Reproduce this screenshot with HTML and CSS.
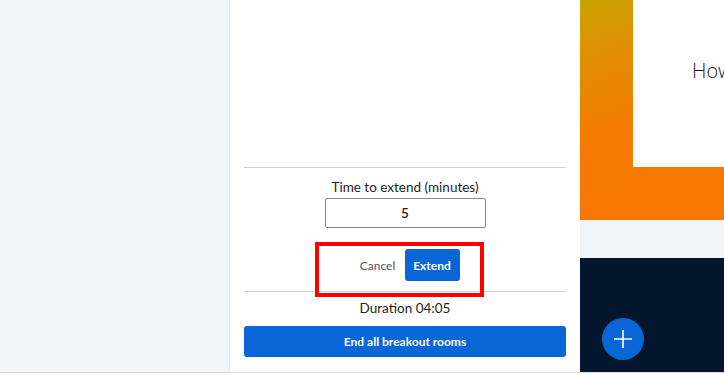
FILE: index.html
```html
<!DOCTYPE html>
<html>
<head>
<meta charset="utf-8">
<link rel="stylesheet" href="styles.css">
</head>
<body>
<div class="app">
  <aside class="sidebar"></aside>
  <section class="panel">
    <div class="spacer"></div>
    <hr class="sep">
    <label class="field-label" for="mins">Time to extend (minutes)</label>
    <input id="mins" class="field" type="text" value="5">
    <div class="actions">
      <button class="btn-link">Cancel</button>
      <button class="btn-primary">Extend</button>
      <div class="highlight"></div>
    </div>
    <hr class="sep sep-2">
    <div class="duration">Duration 04:05</div>
    <button class="btn-end">End all breakout rooms</button>
  </section>
  <section class="stage">
    <div class="slide">
      <div class="slide-card"><span class="slide-text">How</span></div>
    </div>
    <div class="band"></div>
    <div class="dock">
      <button class="fab" aria-label="Add">
        <svg width="20" height="20" viewBox="0 0 20 20"><path d="M10 1v18M1 10h18" stroke="#fff" stroke-width="1.6" fill="none"/></svg>
      </button>
    </div>
  </section>
</div>
</body>
</html>
```

FILE: styles.css
```css
* { box-sizing: border-box; }
html, body { margin: 0; padding: 0; background: #fff; }
body { font-family: "Lato", "Noto Sans", sans-serif; color: #222; }

.app {
  display: flex;
  height: 373px;
  border-bottom: 1px solid #dcdcdc;
  overflow: hidden;
}

.sidebar {
  width: 230px;
  flex: none;
  background: #f3f6f9;
  border-right: 1px solid #e7eaee;
}

.panel {
  width: 350px;
  flex: none;
  background: #fff;
  display: flex;
  flex-direction: column;
  align-items: center;
  padding: 0 14px 15px;
}
.spacer { flex: 1; }

.sep {
  width: 100%;
  margin: 0;
  border: 0;
  border-top: 1px solid #cfcfcf;
  height: 0;
}
.sep-2 { margin-top: 10px; }

.field-label {
  margin-top: 11px;
  font-size: 13.5px;
  line-height: 16px;
  color: #1e1e1e;
}

.field {
  margin-top: 3px;
  width: 161px;
  height: 30px;
  border: 1px solid #8a8a8a;
  border-radius: 2px;
  text-align: center;
  font-family: inherit;
  font-size: 13.5px;
  font-weight: 600;
  color: #222;
  padding: 0;
}

.actions {
  position: relative;
  width: 100%;
  margin-top: 21px;
  display: flex;
  justify-content: center;
  height: 32px;
}

.btn-link {
  width: 54px;
  border: 0;
  background: none;
  font-family: inherit;
  font-size: 12px;
  color: #555;
  padding: 0;
}

.btn-primary {
  width: 55px;
  border: 0;
  border-radius: 3px;
  background: #0866d6;
  color: #fff;
  font-family: inherit;
  font-size: 12px;
  font-weight: 700;
  padding: 0;
}

.highlight {
  position: absolute;
  left: 71px;
  top: -7px;
  width: 169px;
  height: 55px;
  border: 4px solid #f00;
  pointer-events: none;
}

.duration {
  margin-top: 8px;
  font-size: 13.5px;
  line-height: 16px;
  color: #1e1e1e;
}

.btn-end {
  margin-top: 10px;
  width: 100%;
  height: 31px;
  border: 0;
  border-radius: 3px;
  background: #0866d6;
  color: #fff;
  font-family: inherit;
  font-size: 12px;
  font-weight: 700;
}

.stage {
  flex: 1;
  display: flex;
  flex-direction: column;
  background: #03162d;
}

.slide {
  height: 220px;
  flex: none;
  background: linear-gradient(160deg, #c9a200 0%, #e78a00 30%, #f57800 55%, #f77800 100%);
  padding-left: 53px;
}

.slide-card {
  height: 167px;
  background: #fff;
  padding: 57px 0 0 59px;
  white-space: nowrap;
  overflow: hidden;
}

.slide-text {
  font-family: "Open Sans", sans-serif;
  font-weight: 300;
  font-size: 20px;
  color: #1a1a1a;
}

.band {
  height: 38px;
  flex: none;
  background: #f1f4f7;
}

.dock {
  flex: 1;
  background: #03162d;
  padding: 60px 0 0 22px;
}

.fab {
  width: 42px;
  height: 42px;
  border-radius: 50%;
  border: 0;
  background: #0866d6;
  display: flex;
  align-items: center;
  justify-content: center;
  padding: 0;
}
```
